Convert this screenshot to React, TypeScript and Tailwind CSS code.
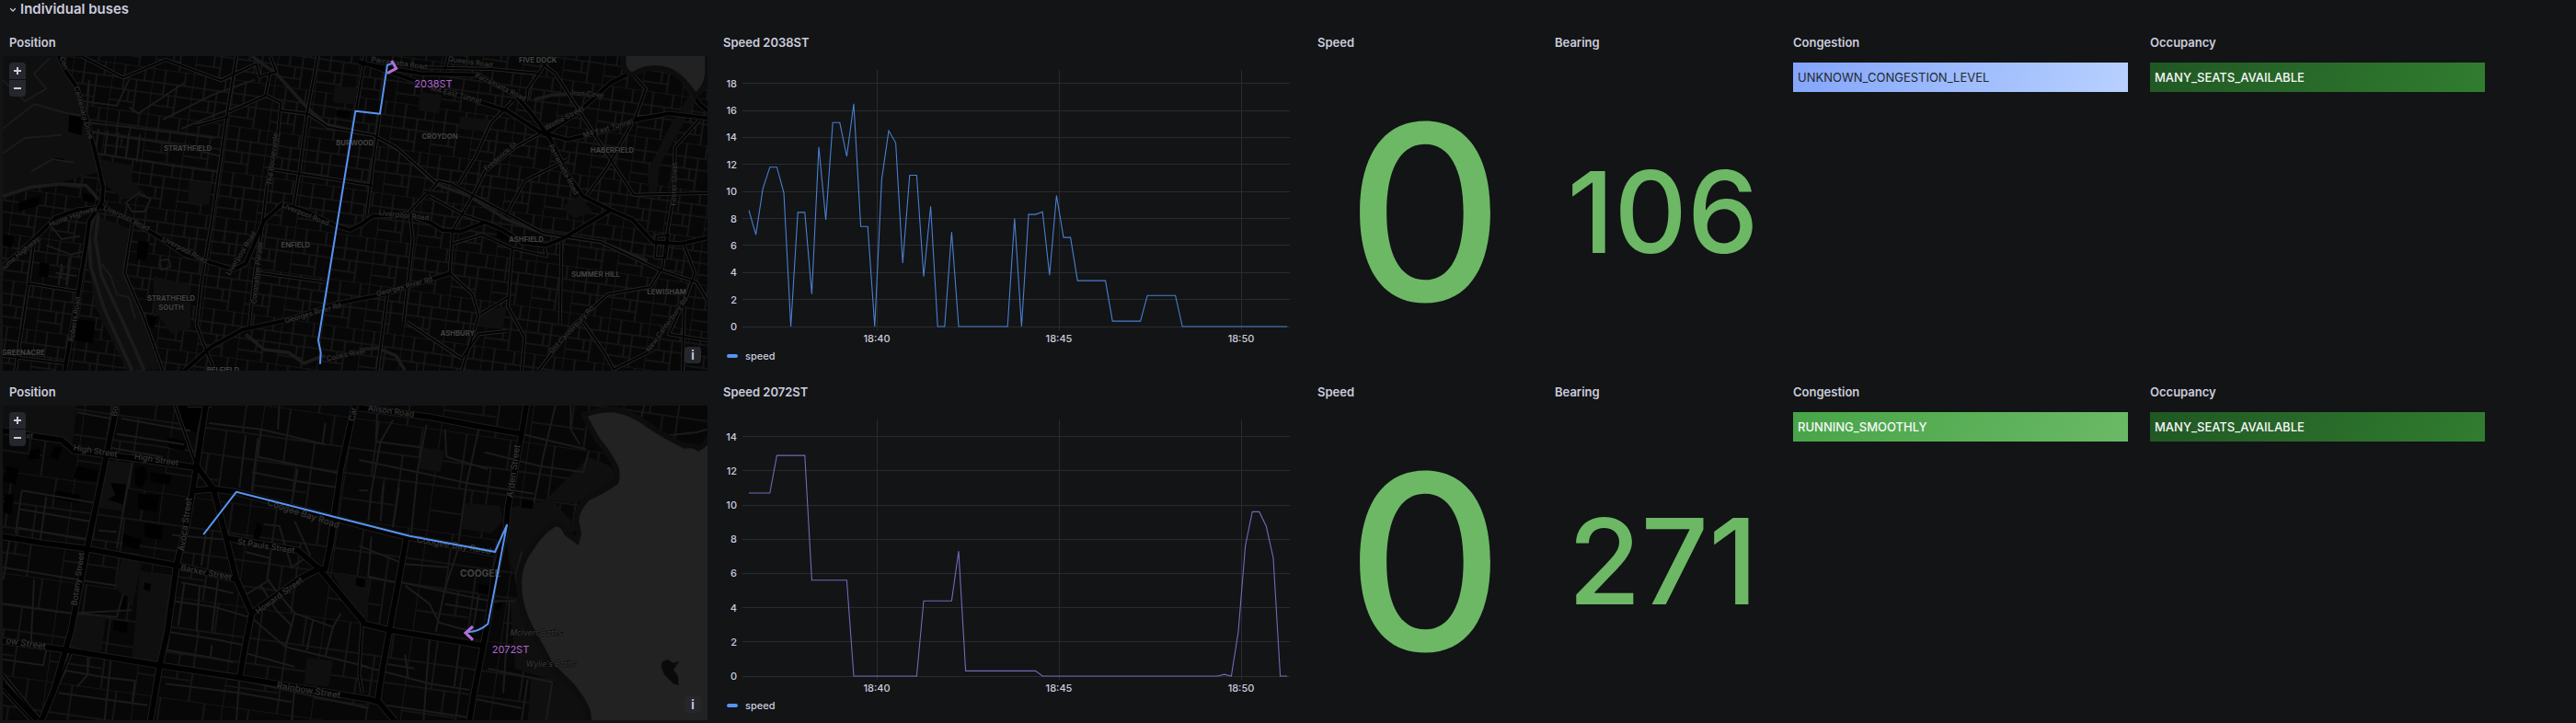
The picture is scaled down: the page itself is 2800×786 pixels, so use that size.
import { useId, type ReactNode } from "react";

type Sample = [step: number, value: number];

const STEP_PX = 7.6;

const speed2038: Sample[] = [
  [0, 8.6], [1, 6.8], [2, 10.2], [3, 11.8], [4, 11.8], [5, 9.9], [6, 0], [7, 8.45], [8, 8.45],
  [9, 2.4], [10, 13.3], [11, 7.9], [12, 15.1], [13, 15.1], [14, 12.6], [15, 16.5], [16, 7.4],
  [17, 7.4], [18, 0], [19, 10.9], [20, 14.5], [21, 13.6], [22, 4.7], [23, 11.2], [24, 11.2],
  [25, 3.7], [26, 8.9], [27, 0], [28, 0], [29, 7], [30, 0], [37, 0], [38, 8], [39, 0], [40, 8.3],
  [41, 8.3], [42, 8.5], [43, 3.8], [44, 9.7], [45, 6.6], [46, 6.6], [47, 3.4], [51, 3.4],
  [52, 0.4], [56, 0.4], [57, 2.3], [61, 2.3], [62, 0], [77, 0],
];

const speed2072: Sample[] = [
  [0, 10.7], [3, 10.7], [4, 12.9], [8, 12.9], [9, 5.6], [14, 5.6], [15, 0], [24, 0], [25, 4.4],
  [29, 4.4], [30, 7.3], [31, 0.3], [41, 0.3], [42, 0], [67, 0], [68, 0.1], [69, 0], [70, 2.6],
  [71, 7.6], [72, 9.6], [73, 9.6], [74, 8.75], [75, 6.9], [76, 0], [77, 0],
];

function Panel({ title, children }: { title: string; children: ReactNode }) {
  return (
    <section className="flex h-[372px] min-w-0 flex-col p-px">
      <h2 className="h-7 shrink-0 px-[7px] text-[13px] leading-[27px] font-semibold">{title}</h2>
      <div className="min-h-0 flex-1">{children}</div>
    </section>
  );
}

function SpeedChart({ samples, max, stroke }: { samples: Sample[]; max: number; stroke: string }) {
  const bottom = 294;
  const height = 279;
  const y = (v: number) => bottom - (v / max) * height;
  const ticks = Array.from({ length: Math.floor(max / 2) + 1 }, (_, i) => i * 2);
  const times = [
    { x: 174, label: "18:40" },
    { x: 372, label: "18:45" },
    { x: 570, label: "18:50" },
  ];
  return (
    <div className="flex h-full flex-col">
      <svg viewBox="0 0 636 315" className="w-full" role="img" aria-label="Speed over time">
        <g stroke="#292b2f" strokeWidth="1" shapeRendering="crispEdges">
          {ticks.map((t) => (
            <line key={t} x1="28" x2="623" y1={y(t)} y2={y(t)} />
          ))}
          {times.map((t) => (
            <line key={t.label} x1={t.x} x2={t.x} y1={bottom - height} y2={bottom + 4} />
          ))}
        </g>
        <g fill="#ccccdc" fontSize="11" fontWeight="500">
          {ticks.map((t) => (
            <text key={t} x="22" y={y(t) + 4} textAnchor="end">{t}</text>
          ))}
          {times.map((t) => (
            <text key={t.label} x={t.x} y="311" textAnchor="middle">{t.label}</text>
          ))}
        </g>
        <polyline
          points={samples.map(([s, v]) => `${(35 + s * STEP_PX).toFixed(1)},${y(v).toFixed(1)}`).join(" ")}
          fill="none"
          stroke={stroke}
          strokeWidth="1.1"
        />
      </svg>
      <div className="flex h-[22px] items-center gap-2 pl-[11px] text-[11px] font-medium">
        <span className="h-1 w-3 rounded-sm bg-[#5794f2]" />
        speed
      </div>
    </div>
  );
}

function Stat({ value, size }: { value: number; size: string }) {
  return (
    <div className={`flex h-full items-center justify-center pb-1 leading-none font-medium text-[#6cb865] ${size}`}>
      {value}
    </div>
  );
}

function StatusCell({ text, tone }: { text: string; tone: string }) {
  return (
    <div className="px-[7px] pt-[7px]">
      <div className={`h-8 truncate px-[5px] text-[13px] leading-8 ${tone}`}>{text}</div>
    </div>
  );
}

type Label = { t: string; x: number; y: number; r?: number; s?: number; kind?: "place" | "italic" };

type MapData = {
  viewBox: string;
  origin: [number, number];
  angle: number;
  cell: [number, number];
  parks: string[];
  rails: string[];
  minor: string[];
  secondary: string[];
  major: string[];
  majorWidth: number;
  buildings: string[];
  water: string[];
  islands: string[];
  labels: Label[];
  route: string;
  arrow: string;
  bus: Label;
};

const burwoodMap: MapData = {
  viewBox: "8 183 2298 1026",
  origin: [8, 183],
  angle: 8,
  cell: [132, 150],
  parks: [
    "M8 183H190L250 300 300 440 325 560 210 590 90 620 8 650Z",
    "M330 520 430 540 430 590 480 640 400 650 340 600Z",
    "M300 700 420 745 400 890 460 1030 520 1205H410L310 1000 285 850Z",
    "M500 900 620 930 620 1070 560 1090 500 1010Z",
    "M615 590 690 600 680 670 612 660Z",
    "M1090 280 1160 285 1150 340 1085 335Z",
    "M1370 300 1440 310 1430 370 1365 360Z",
    "M1500 380 1600 390 1590 430 1495 420Z",
    "M1835 670 1890 640 1930 690 1870 715Z",
    "M1570 1010 1650 1000 1640 1070 1560 1060Z",
    "M2110 560 2190 400 2260 290 2280 310 2150 540 2140 640 2115 640Z",
  ],
  rails: [
    "M820 183 900 240 990 340 1060 405 1215 440 1300 490 1420 600 1530 640 1650 715 1780 765 1960 790 2110 850",
    "M310 690 290 760 295 870 340 1010 430 1209",
    "M320 700 310 780 330 900 400 1050 470 1209",
    "M8 640 100 610 200 600 280 605 320 650",
    "M1740 325 1800 310 1900 305 1960 320",
    "M1170 1140 1230 1135 1290 1160 1320 1209",
    "M800 1090 860 1140 940 1150 990 1185 1040 1165 1060 1160",
  ],
  minor: [
    "M8 260 80 330 150 290 110 240 160 190", "M8 420 110 340 220 370 290 380", "M8 500 80 450 200 440",
    "M100 560 170 520 240 530", "M290 260 280 400 420 415 700 450", "M290 430 560 470 720 510",
    "M310 500 560 540 710 560", "M320 420 310 500M350 424 340 505M385 430 375 512M420 432 408 520M455 438 445 530",
    "M530 390 690 310 830 260", "M590 420 710 370 860 320", "M270 330 380 345 420 260", "M420 350 450 370 600 270",
    "M160 730 200 780 260 770M150 800 230 830 270 820", "M200 860 190 930M225 840 215 930M180 890 250 900",
    "M410 660 450 630 490 650 470 690 430 690Z", "M520 850 550 845 555 870 525 880Z",
    "M330 860 360 900 380 960 420 970 440 1040",
  ],
  secondary: [
    "M265 183 400 253 540 195 720 262 835 208 845 250 900 235 880 183",
    "M770 183 735 400 690 720 655 920 640 1060 670 1140 700 1209",
    "M880 235 865 310 915 335 905 440 870 600 850 770 830 890 810 1075",
    "M745 365 865 312", "M745 380 640 410",
    "M1035 183 1000 370 975 560 955 680",
    "M915 360 1005 372 1070 415 1215 440 1290 480 1420 595",
    "M1190 183 1160 360", "M1238 370 1215 540 1195 700", "M870 550 1215 605",
    "M430 730 405 890 470 1040 530 1209",
    "M110 790 92 925 250 950", "M92 925 50 1209", "M8 1160 210 1185", "M845 890 1060 920",
    "M1670 330 1600 400 1550 510 1495 600",
    "M1770 430 1680 480 1580 560 1540 640 1475 750 1465 890 1540 960 1560 1030 1505 1209",
    "M1405 620 1430 590 1470 600 1640 690 1770 760 1960 790 2150 880 2270 920 2306 980",
    "M1400 640 1510 700 1580 725", "M1475 795 1570 765 1670 810 1780 835 1775 810",
    "M1670 810 1655 1000 1710 1100 1700 1209", "M1565 1025 1655 970",
    "M1755 1209 1870 1060 1980 960 2120 935 2160 870 2170 790 2195 640 2200 480 2280 390",
    "M1770 210 1810 240 1900 380 1990 520 2065 635 2306 630",
    "M1780 205 1720 290 1715 330", "M2060 240 2105 290 2070 385 1980 545 1915 635",
    "M1830 790 1825 1060", "M1325 1050 1505 1170", "M1900 1050 1970 1150 2000 1205 2130 1140",
    "M1390 630 1335 690 1345 780 1315 1050", "M1262 960 1230 1209",
    "M1650 700 1710 590 1850 520", "M1370 220 1600 225 1760 240", "M1460 183 1450 230",
    "M2070 385 2180 370", "M2230 800 2265 890 2240 960 2180 1090 2306 1110", "M2230 1000 2225 1209",
    "M2140 770 2180 765 2170 840 2135 840Z", "M1505 1170 1560 1090 1650 1080",
  ],
  major: [
    "M190 183 215 235 250 285 290 420 320 540 335 610 332 660 290 720 280 800 255 950 210 1209",
    "M8 870 110 780 180 710 250 685 330 675 430 720 520 775 600 830 700 860 760 880 800 860 830 790 860 720 920 665 1000 690 1090 735 1140 750 1180 730 1215 705 1330 700 1400 725 1440 750 1500 755 1580 725 1640 750 1700 790 1780 800 1840 775 1990 685",
    "M1170 205 1370 240 1560 245 1680 310 1740 380 1795 455 1850 570 1900 640 1990 685 2060 715 2130 790 2220 795 2306 775",
    "M1170 200 1400 280 1650 360 1760 430 1850 455 1960 430 2080 390 2180 370 2306 385",
    "M1770 440 1880 370 1990 270 2080 225 2150 215 2220 250 2280 340 2306 360",
    "M600 1209 690 1130 790 1075 930 1045 1100 990 1250 960 1470 890",
  ],
  majorWidth: 11,
  buildings: [
    "M225 375 270 385 265 440 222 430Z", "M270 630 310 635 308 660 270 655Z", "M450 785 485 790 475 850 445 845Z",
    "M130 855 160 860 155 905 125 900Z", "M175 515 210 518 208 528 175 525Z", "M480 1030 510 1035 500 1070 475 1060Z",
    "M1095 360 1140 365 1135 385 1095 380Z", "M250 1040 310 1050 300 1120 245 1110Z", "M60 660 130 640 125 670 60 690Z",
    "M8 760 45 775 35 810 8 800Z", "M1620 750 1660 760 1655 785 1620 775Z",
  ],
  water: ["M2040 183 2041 210Q2046 230 2060 235 2090 215 2130 213 2180 212 2215 240 2245 265 2268 300 2295 275 2298 240L2298 183Z"],
  islands: [],
  labels: [
    { t: "STRATHFIELD", x: 611, y: 492, kind: "place" },
    { t: "BURWOOD", x: 1156, y: 473, kind: "place" },
    { t: "ENFIELD", x: 963, y: 806, kind: "place" },
    { t: "STRATHFIELD", x: 557, y: 982, kind: "place" },
    { t: "SOUTH", x: 557, y: 1010, kind: "place" },
    { t: "GREENACRE", x: 75, y: 1158, kind: "place" },
    { t: "BELFIELD", x: 726, y: 1216, kind: "place" },
    { t: "CROYDON", x: 1433, y: 453, kind: "place" },
    { t: "HABERFIELD", x: 1995, y: 499, kind: "place" },
    { t: "ASHFIELD", x: 1715, y: 790, kind: "place" },
    { t: "SUMMER HILL", x: 1941, y: 902, kind: "place" },
    { t: "LEWISHAM", x: 2173, y: 960, kind: "place" },
    { t: "ASHBURY", x: 1491, y: 1095, kind: "place" },
    { t: "FIVE DOCK", x: 1753, y: 203, kind: "place" },
    { t: "Centenary Drive", x: 264, y: 370, r: 74 },
    { t: "Cen", x: 200, y: 208, r: 70 },
    { t: "Hume Highway", x: 240, y: 712, r: -20 },
    { t: "Hume Highway", x: 66, y: 835, r: -40 },
    { t: "Liverpool Road", x: 408, y: 718, r: 26 },
    { t: "Liverpool Road", x: 598, y: 822, r: 28 },
    { t: "Liverpool Road", x: 792, y: 830, r: -58 },
    { t: "Liverpool Road", x: 992, y: 706, r: 22 },
    { t: "Liverpool Road", x: 1315, y: 710, r: 6 },
    { t: "The Boulevarde", x: 895, y: 520, r: -83 },
    { t: "Coronation Parade", x: 845, y: 890, r: -84 },
    { t: "Roberts Road", x: 250, y: 1042, r: -81 },
    { t: "Georges River Rd", x: 1022, y: 1028, r: -16 },
    { t: "Georges River Rd", x: 1320, y: 942, r: -15 },
    { t: "Cooks River", x: 1130, y: 1164, r: -12 },
    { t: "Parramatta Road", x: 1300, y: 214, r: 8 },
    { t: "Queens Road", x: 1532, y: 210, r: 8 },
    { t: "Parramatta Road", x: 1628, y: 290, r: 26 },
    { t: "M4 East Tunnel", x: 1484, y: 316, r: 15 },
    { t: "Wattle Street", x: 1843, y: 392, r: -28 },
    { t: "M4 East Tunnel", x: 1984, y: 426, r: -16 },
    { t: "Iron Cove", x: 1915, y: 314, r: 4 },
    { t: "Frederick St", x: 1636, y: 516, r: -40 },
    { t: "Parramatta Road", x: 1830, y: 556, r: 62 },
    { t: "Foster Street", x: 2205, y: 600, r: -88 },
    { t: "Old Canterbury Rd", x: 1868, y: 1080, r: -47 },
    { t: "New Canterbury Rd", x: 2180, y: 1062, r: -54 },
  ],
  route: "M1043 1185 1045 1150 1037 1110 1158 362 1238 371 1262 212 1275 208",
  arrow: "M1276 198 1291 223 1262 239",
  bus: { t: "2038ST", x: 1412, y: 285 },
};

const coogeeMap: MapData = {
  viewBox: "8 123 2298 1026",
  origin: [8, 123],
  angle: 8,
  cell: [290, 330],
  parks: [
    "M8 123H250L235 250 110 215 8 200Z",
    "M340 300 430 310 405 470 320 455Z",
    "M235 795 345 810 330 925 222 910Z",
    "M455 660 560 680 520 960 430 945Z",
    "M370 710 400 610 460 640 430 780Z",
    "M1000 945 1085 955 1070 1040 990 1030Z",
    "M1080 665 1200 690 1200 820 1150 790Z",
    "M1380 260 1450 270 1435 340 1365 330Z",
    "M1510 440 1630 450 1640 500 1600 540 1505 525Z",
    "M1640 460 1735 440 1800 430 1880 520 1850 560 1780 530 1715 610 1700 700 1660 640Z",
    "M1920 290 1990 320 2010 350 1960 420 1870 440 1780 430Z",
    "M1730 1010 1800 1025 1880 1080 1920 1149H1720Z",
    "M1660 740 1690 760 1760 880 1800 960 1900 1070 1920 1149 1800 1020 1680 980Z",
  ],
  rails: [],
  minor: [
    "M250 145 360 165M395 165 620 205M380 215 600 250M360 260 530 290", "M430 310 400 470 380 590",
    "M70 400 310 440M60 460 290 500M50 520 280 560", "M70 400 50 540M150 420 130 565",
    "M8 650 250 690 380 710", "M8 770 225 800 430 790", "M110 690 100 900M30 560 10 690",
    "M320 530 380 535M290 590 450 610", "M240 800 380 812 400 740", "M545 860 700 885 800 905",
    "M560 760 700 780 820 815", "M590 700 700 720 760 735", "M600 705 580 840M650 710 640 860M710 690 690 860",
    "M545 920 690 945 760 960", "M690 905 685 945", "M560 545 740 560", "M670 545 655 645",
    "M680 180 850 200 1060 250", "M850 200 840 290 1110 345", "M820 340 970 370 1100 390", "M970 330 950 440",
    "M910 123 905 200M1060 180 1050 250", "M800 220 780 390M840 230 820 400", "M860 510 910 515 950 650 1010 610 960 500",
    "M800 600 880 620 870 690 960 800 1085 845 1110 800", "M800 740 880 690M850 710 900 790 950 840 930 910",
    "M960 800 930 910M1020 820 1000 920M1085 845 1060 940", "M820 815 930 910 1200 975", "M800 930 960 975",
    "M700 1000 1200 1110", "M540 1030 780 1060 950 1090", "M780 1010 770 1149M960 1040 950 1149",
    "M215 985 180 1050M200 985 350 1010 440 1020 430 1090", "M285 945 285 1000 250 1040M360 955 340 1149",
    "M190 1060 480 1100M8 950 140 970 150 920", "M1230 123 1225 240 1380 260", "M1280 170 1240 240 1210 400 1200 500",
    "M1390 185 1360 340 1340 540", "M1450 200 1455 290 1590 330", "M1560 200 1520 380 1490 600",
    "M1170 400 1200 400M1170 300 1360 340 1520 375 1740 410", "M1250 380 1240 500M1300 390 1280 520",
    "M1700 215 1800 240 1910 265", "M1810 123 1770 290 1740 440", "M1860 123 1860 200 1890 250",
    "M1580 275 1760 320 1900 340 1920 270", "M1170 580 1320 640 1460 650", "M1210 550 1200 680 1290 700",
    "M1320 710 1400 770 1430 830 1500 850 1550 860", "M1310 700 1450 730 1620 765", "M1490 600 1450 720 1420 860",
    "M1560 740 1540 860M1450 770 1600 795", "M1170 970 1250 990 1400 1030 1530 1050", "M1400 880 1380 1149",
    "M1260 965 1350 980M1320 935 1330 1010", "M1500 890 1480 1040M1590 980 1800 1025 1780 1149M1720 1015 1700 1149",
    "M1660 760 1640 1060", "M1550 1080 1700 1110", "M1260 1100 1530 1140", "M1610 760 1680 760",
    "M1700 600 1680 680 1700 780 1760 860", "M2180 220 2270 210 2306 200M2100 123 2080 200M1990 150 1980 170",
  ],
  secondary: [
    "M570 123 640 320", "M630 400 640 330", "M610 123 690 123", "M1090 430 1060 655", "M1180 830 1170 1000 1180 1060",
    "M8 1000 130 1149", "M8 1050 100 1149", "M230 930 180 1050 130 1149",
  ],
  major: [
    "M670 123 640 320 610 500 575 640 545 860 520 970 490 1149",
    "M8 205 110 222 200 235 240 270 400 290 640 325",
    "M380 123 345 290 285 580 230 860 210 930 175 1050 135 1149",
    "M8 550 130 570 285 590 470 625 580 645 770 690",
    "M8 890 215 920 520 970 780 1010 1200 1080 1235 1090 1285 1149",
    "M640 320 695 395 735 550 770 690 820 800 800 900 780 1010",
    "M630 400 695 395 770 405 1200 520 1320 550 1610 605",
    "M1155 123 1110 330 1080 560 1060 655 1040 655",
    "M740 555 970 595 1040 655 1190 835 1270 855 1420 880 1570 905",
    "M820 800 980 685 1040 655",
    "M1715 123 1700 215 1655 455 1650 520 1610 690 1590 830 1575 905 1545 1060 1530 1149",
    "M1170 130 1400 160 1545 188 1700 215",
    "M1325 550 1298 700 1270 850 1245 990 1230 1090",
    "M8 1030 120 1149",
  ],
  majorWidth: 17,
  buildings: [
    "M580 123H660L640 210 600 200Z", "M360 375 410 380 400 445 350 430 375 415Z", "M545 225 610 240 600 270 550 260Z",
    "M450 410 520 415 510 470 450 460Z", "M440 330 470 320 480 350 460 390 440 380Z", "M95 270 130 262 128 295 92 300Z",
    "M180 255 200 258 190 300 160 290Z", "M20 320 60 330 50 380 10 370Z", "M180 400 260 415 255 440 175 425Z",
    "M15 410 45 415 35 480 10 470Z", "M470 505 530 515 525 560 470 550Z", "M400 540 460 560 450 590 400 580Z",
    "M370 825 415 830 412 865 370 855Z", "M395 740 415 745 410 790 390 785Z", "M470 700 492 705 488 728 468 722Z",
    "M490 340 560 350 550 380 490 370Z", "M840 500 855 520 840 570 825 550Z", "M1160 685 1185 688 1182 715 1160 710Z",
    "M1060 830 1070 820 1082 835Z", "M250 320 320 335 310 370 240 360Z", "M1170 690 1190 690 1188 715 1170 712Z",
    "M1700 430 1740 435 1735 460 1700 455Z", "M1560 705 1595 710 1590 740 1560 735Z", "M1610 765 1635 768 1632 790 1610 786Z",
  ],
  water: [
    "M1915 158Q1950 145 2000 145 2060 155 2110 195 2170 235 2230 263 2255 258 2275 272 2295 265 2306 250V1149H1928L1925 1120Q1915 1085 1870 1030 1820 980 1800 960 1770 900 1740 850 1700 780 1700 700 1700 640 1740 590 1780 530 1815 517 1830 520 1840 545L1885 578 1895 540 1887 500Q1885 470 1920 432 1960 415 2015 378 2025 350 2015 320 1990 270 1955 230Z",
  ],
  islands: ["M2158 960 2175 950 2195 962 2214 956 2195 985 2210 1005 2212 1035 2195 1030 2165 1000 2155 975Z"],
  labels: [
    { t: "COOGEE", x: 1565, y: 681, s: 31, kind: "place" },
    { t: "High Street", x: 309, y: 280, r: 9, s: 27 },
    { t: "High Street", x: 508, y: 308, r: 9, s: 27 },
    { t: "Botany Street", x: 262, y: 690, r: -82, s: 27 },
    { t: "Bo", x: 382, y: 142, r: -82, s: 27 },
    { t: "Avoca Street", x: 612, y: 512, r: -82, s: 29 },
    { t: "Barker Street", x: 670, y: 676, r: 11, s: 27 },
    { t: "St Pauls Street", x: 865, y: 590, r: 9, s: 27 },
    { t: "Howard Street", x: 915, y: 750, r: -36, s: 27 },
    { t: "Coogee Bay Road", x: 985, y: 485, r: 18, s: 29 },
    { t: "Coogee Bay Road", x: 1478, y: 588, r: 9, s: 29 },
    { t: "Rainbow Street", x: 1004, y: 1061, r: 9, s: 29 },
    { t: "ow Street", x: 82, y: 908, r: 9, s: 29 },
    { t: "Car", x: 1159, y: 152, r: -80, s: 27 },
    { t: "Alison Road", x: 1273, y: 150, r: 8, s: 27 },
    { t: "Arden Street", x: 1683, y: 338, r: -82, s: 29 },
    { t: "et", x: 95, y: 230, r: 5, s: 25 },
    { t: "McIvers Baths", x: 1748, y: 874, s: 25, kind: "italic" },
    { t: "Wylie's Baths", x: 1796, y: 976, s: 25, kind: "italic" },
  ],
  route: "M664 541 770 404 1170 506 1335 548 1613 600 1652 512 1590 835Q1560 862 1520 862",
  arrow: "M1541 843 1517 864 1541 887",
  bus: { t: "2072ST", x: 1664, y: 929 },
};

function MapButton({ label, children, position }: { label: string; children: ReactNode; position?: string }) {
  return (
    <button
      type="button"
      aria-label={label}
      className={`flex size-[18px] items-center justify-center bg-[#25272d] text-[#ccccdc] ${position ?? ""}`}
    >
      {children}
    </button>
  );
}

function BusMap({ data }: { data: MapData }) {
  const id = useId();
  const [w, h] = data.cell;
  return (
    <div className="relative h-full overflow-hidden bg-[#070707]">
      <svg viewBox={data.viewBox} preserveAspectRatio="xMidYMid slice" className="size-full" role="img" aria-label="Bus position map">
        <defs>
          <pattern id={id} width={w} height={h} patternUnits="userSpaceOnUse" patternTransform={`rotate(${data.angle})`}>
            <path
              d={`M0 0H${w}M0 ${h * 0.3}H${w}M0 ${h * 0.55}H${w}M0 ${h * 0.8}H${w * 0.6}M0 0V${h}M${w * 0.3} 0V${h * 0.55}M${w * 0.62} ${h * 0.3}V${h}M${w * 0.8} 0V${h * 0.3}M${w * 0.45} ${h * 0.55}V${h * 0.8}`}
              fill="none"
              stroke="#181818"
              strokeWidth="5"
            />
          </pattern>
        </defs>
        <rect x={data.origin[0]} y={data.origin[1]} width="2298" height="1026" fill={`url(#${id})`} />
        <g fill="#0f0f0f">{data.parks.map((d) => <path key={d} d={d} />)}</g>
        <g fill="#010101">{data.buildings.map((d) => <path key={d} d={d} />)}</g>
        <g fill="none" strokeLinejoin="round">
          {data.rails.map((d) => <path key={d} d={d} stroke="#1b1b1b" strokeWidth="11" />)}
          {data.minor.map((d) => <path key={d} d={d} stroke="#1b1b1b" strokeWidth="6" />)}
          {data.secondary.map((d) => <path key={d} d={d} stroke="#232323" strokeWidth="12" />)}
          {data.major.map((d) => <path key={d} d={d} stroke="#1d1d1d" strokeWidth={data.majorWidth + 6} />)}
          {data.secondary.map((d) => <path key={d} d={d} stroke="#020202" strokeWidth="6" />)}
          {data.major.map((d) => <path key={d} d={d} stroke="#010101" strokeWidth={data.majorWidth} />)}
        </g>
        <g fill="#0d0d0d" stroke="#0d0d0d" strokeWidth="36">{data.water.map((d) => <path key={d} d={d} />)}</g>
        <g fill="#222222">{data.water.map((d) => <path key={d} d={d} />)}</g>
        <g fill="#0a0a0a">{data.islands.map((d) => <path key={d} d={d} />)}</g>
        <g textAnchor="middle">
          {data.labels.map((l) => (
            <text
              key={`${l.t}-${l.x}`}
              x={l.x}
              y={l.y}
              fontSize={l.s ?? 23}
              fontWeight={l.kind === "place" ? 700 : 500}
              fontStyle={l.kind === "italic" ? "italic" : "normal"}
              fill={l.kind === "place" ? "#424242" : "#363636"}
              stroke="#070707"
              strokeWidth="3"
              paintOrder="stroke"
              transform={l.r ? `rotate(${l.r} ${l.x} ${l.y})` : undefined}
            >
              {l.t}
            </text>
          ))}
        </g>
        <path d={data.route} fill="none" stroke="#5794f2" strokeWidth="6" strokeLinejoin="round" strokeLinecap="round" />
        <path d={data.arrow} fill="none" stroke="#b570da" strokeWidth="9" />
        <text x={data.bus.x} y={data.bus.y} textAnchor="middle" fontSize="33" fill="#b065d4">{data.bus.t}</text>
      </svg>
      <div className="absolute top-[7px] left-[7px] flex flex-col gap-px overflow-hidden rounded-sm">
        <MapButton label="Zoom in">
          <svg viewBox="0 0 8 8" className="size-2" stroke="currentColor" strokeWidth="2"><path d="M4 0V8M0 4H8" /></svg>
        </MapButton>
        <MapButton label="Zoom out">
          <svg viewBox="0 0 8 8" className="size-2" stroke="currentColor" strokeWidth="2"><path d="M0 4H8" /></svg>
        </MapButton>
      </div>
      <MapButton label="Map attribution" position="absolute right-[7px] bottom-2 rounded-sm text-[13px] font-bold leading-none">
        i
      </MapButton>
    </div>
  );
}

export default function App() {
  return (
    <main className="min-h-screen bg-[#121416] pb-0.5 pl-0.5 font-['Inter',sans-serif] text-[#ccccdc]">
      <h1 className="flex h-8 items-start">
        <button type="button" aria-expanded="true" className="flex h-[19px] items-center gap-1 pl-2 text-[15px] leading-[19px] font-semibold">
          <svg viewBox="0 0 8 8" className="size-2" fill="none" stroke="currentColor" strokeWidth="1.2" strokeLinecap="round" strokeLinejoin="round">
            <path d="M1.5 3.5 4 6 6.5 3.5" />
          </svg>
          Individual buses
        </button>
      </h1>
      <div className="grid grid-cols-[768fr_638fr_250fr_251fr_380fr_380fr_83fr] gap-2">
        <Panel title="Position"><BusMap data={burwoodMap} /></Panel>
        <Panel title="Speed 2038ST"><SpeedChart samples={speed2038} max={19} stroke="#4a7fd0" /></Panel>
        <Panel title="Speed"><Stat value={0} size="text-[265px]" /></Panel>
        <Panel title="Bearing"><Stat value={106} size="text-[123px]" /></Panel>
        <Panel title="Congestion">
          <StatusCell text="UNKNOWN_CONGESTION_LEVEL" tone="bg-linear-[120deg] from-[#83a5fb] to-[#b8d1ff] text-[#24292e]" />
        </Panel>
        <Panel title="Occupancy">
          <StatusCell text="MANY_SEATS_AVAILABLE" tone="bg-linear-[120deg] from-[#205723] to-[#317d30] font-medium text-[#f7f8fa]" />
        </Panel>
        <span />
        <Panel title="Position"><BusMap data={coogeeMap} /></Panel>
        <Panel title="Speed 2072ST"><SpeedChart samples={speed2072} max={15} stroke="#7468b8" /></Panel>
        <Panel title="Speed"><Stat value={0} size="text-[265px]" /></Panel>
        <Panel title="Bearing"><Stat value={271} size="text-[129px]" /></Panel>
        <Panel title="Congestion">
          <StatusCell text="RUNNING_SMOOTHLY" tone="bg-linear-[120deg] from-[#47a447] to-[#6bb966] font-medium text-[#f7f8fa]" />
        </Panel>
        <Panel title="Occupancy">
          <StatusCell text="MANY_SEATS_AVAILABLE" tone="bg-linear-[120deg] from-[#205723] to-[#317d30] font-medium text-[#f7f8fa]" />
        </Panel>
      </div>
    </main>
  );
}
